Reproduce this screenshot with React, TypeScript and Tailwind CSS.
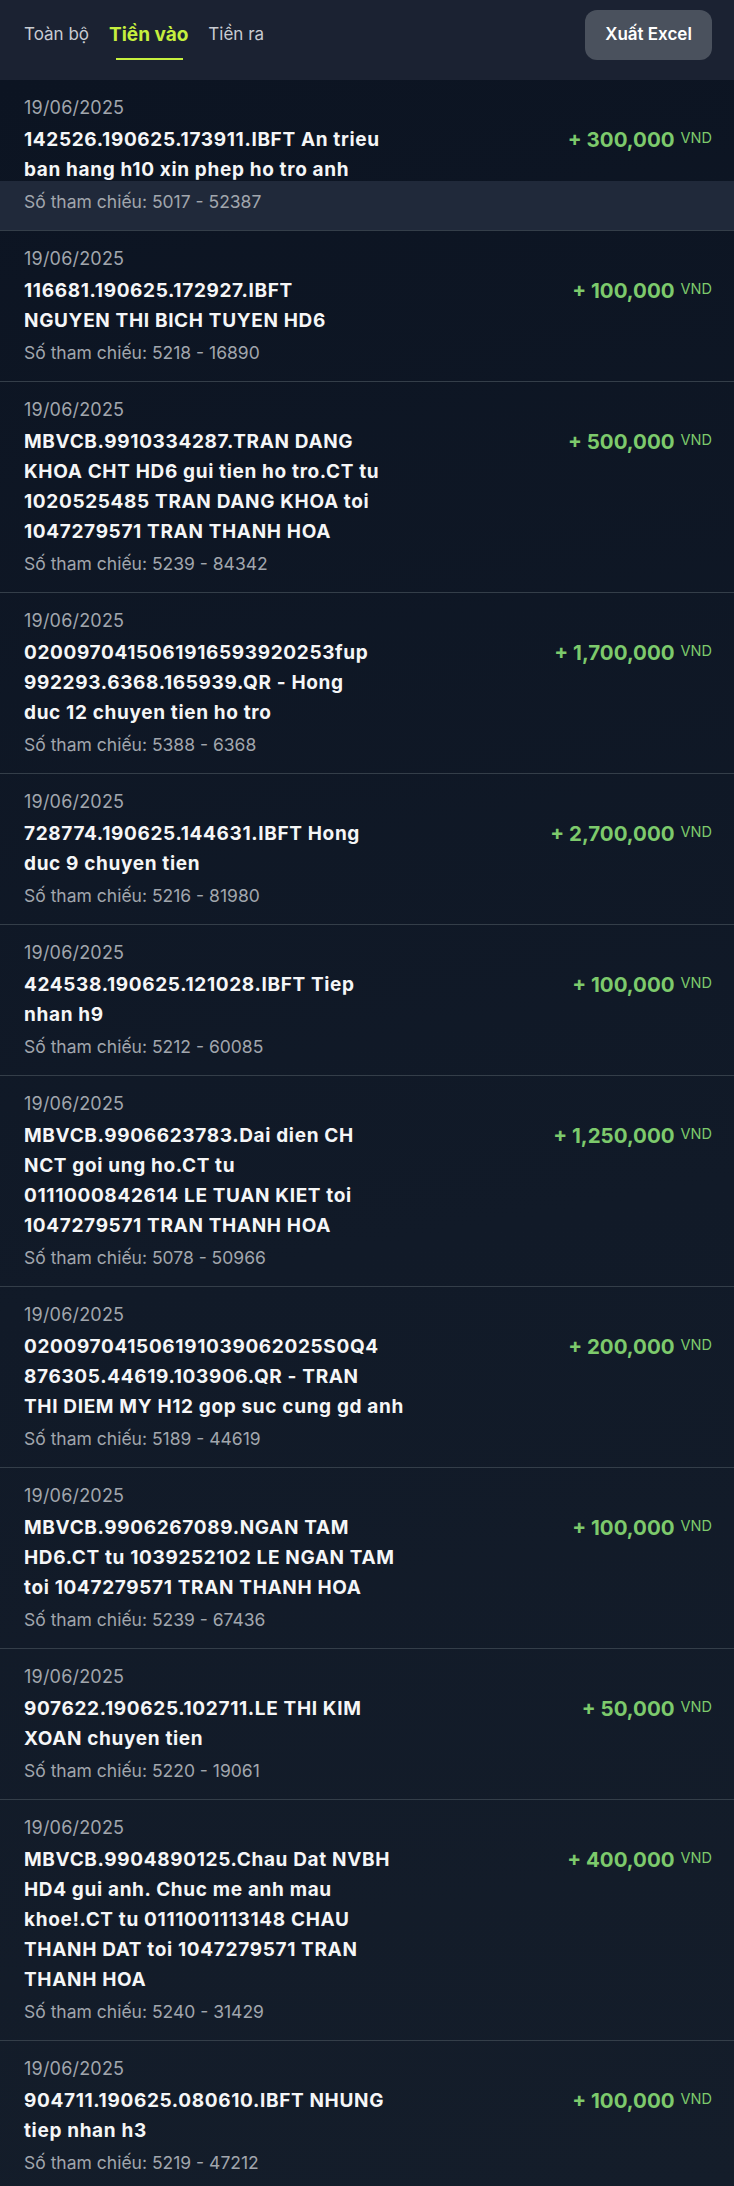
import React from 'react';

type Txn = {
  amount: string;
  lines: string[];
  ref: string;
};

const TXNS: Txn[] = [
  { amount: '300,000', lines: ['142526.190625.173911.IBFT An trieu', 'ban hang h10 xin phep ho tro anh'], ref: '5017 - 52387' },
  { amount: '100,000', lines: ['116681.190625.172927.IBFT', 'NGUYEN THI BICH TUYEN HD6'], ref: '5218 - 16890' },
  {
    amount: '500,000',
    lines: ['MBVCB.9910334287.TRAN DANG', 'KHOA CHT HD6 gui tien ho tro.CT tu', '1020525485 TRAN DANG KHOA toi', '1047279571 TRAN THANH HOA'],
    ref: '5239 - 84342',
  },
  { amount: '1,700,000', lines: ['0200970415061916593920253fup', '992293.6368.165939.QR - Hong', 'duc 12 chuyen tien ho tro'], ref: '5388 - 6368' },
  { amount: '2,700,000', lines: ['728774.190625.144631.IBFT Hong', 'duc 9 chuyen tien'], ref: '5216 - 81980' },
  { amount: '100,000', lines: ['424538.190625.121028.IBFT Tiep', 'nhan h9'], ref: '5212 - 60085' },
  {
    amount: '1,250,000',
    lines: ['MBVCB.9906623783.Dai dien CH', 'NCT goi ung ho.CT tu', '0111000842614 LE TUAN KIET toi', '1047279571 TRAN THANH HOA'],
    ref: '5078 - 50966',
  },
  { amount: '200,000', lines: ['020097041506191039062025S0Q4', '876305.44619.103906.QR - TRAN', 'THI DIEM MY H12 gop suc cung gd anh'], ref: '5189 - 44619' },
  { amount: '100,000', lines: ['MBVCB.9906267089.NGAN TAM', 'HD6.CT tu 1039252102 LE NGAN TAM', 'toi 1047279571 TRAN THANH HOA'], ref: '5239 - 67436' },
  { amount: '50,000', lines: ['907622.190625.102711.LE THI KIM', 'XOAN chuyen tien'], ref: '5220 - 19061' },
  {
    amount: '400,000',
    lines: ['MBVCB.9904890125.Chau Dat NVBH', 'HD4 gui anh. Chuc me anh mau', 'khoe!.CT tu 0111001113148 CHAU', 'THANH DAT toi 1047279571 TRAN', 'THANH HOA'],
    ref: '5240 - 31429',
  },
  { amount: '100,000', lines: ['904711.190625.080610.IBFT NHUNG', 'tiep nhan h3'], ref: '5219 - 47212' },
];

const TxnRow: React.FC<{ txn: Txn; highlight?: boolean }> = ({ txn, highlight }) => (
  <div
    className={
      'border-b border-[#343e49] pl-6 pr-[22px] pt-4 pb-4 ' +
      (highlight ? 'bg-[linear-gradient(to_bottom,transparent_101px,#20293a_101px)]' : '')
    }
  >
    <div className="text-[18px] leading-6 tracking-[0.2px] text-[#a1a6ad]">19/06/2025</div>
    <div className="mt-[5px] flex justify-between">
      <div className="text-[19px] font-bold leading-[30px] tracking-[0.65px] text-[#f5f6f7]">
        {txn.lines.map((line, i) => (
          <div key={i} className="whitespace-nowrap">
            {line}
          </div>
        ))}
      </div>
      <div className="flex items-start whitespace-nowrap text-[#7dca6c]">
        <span className="text-[20.5px] font-bold leading-[30px]">+ {txn.amount}</span>
        <span className="ml-[6px] mt-[5px] text-[14.5px] leading-[15px]">VND</span>
      </div>
    </div>
    <div className="mt-[5px] text-[17.5px] leading-6 text-[#a1a6ad]">Số tham chiếu: {txn.ref}</div>
  </div>
);

const App: React.FC = () => {
  return (
    <div className="min-h-screen w-full bg-[#0e1624] font-[Inter,sans-serif]">
      {/* Tabs + export */}
      <div className="flex h-20 items-start justify-between bg-[#1b2232] pl-6 pr-[22px] pt-[10px]">
        <div className="flex h-[50px] items-center gap-5 text-[17px]">
          <span className="text-[#c9ccd2]">Toàn bộ</span>
          <span className="relative flex h-full items-center text-[19px] font-bold text-[#c6ef3e]">
            Tiền vào
            <span className="absolute bottom-0 left-[7px] right-[5px] h-[2px] bg-[#c6ef3e]" />
          </span>
          <span className="text-[#c9ccd2]">Tiền ra</span>
        </div>
        <button className="h-[50px] w-[127px] rounded-xl bg-[#4a515d] text-[17px] font-semibold text-white">
          Xuất Excel
        </button>
      </div>

      {/* Transactions */}
      <div className="bg-[linear-gradient(170deg,#0c1422_0%,#111a28_55%,#141d2a_100%)]">
        {TXNS.map((t, i) => (
          <TxnRow key={i} txn={t} highlight={i === 0} />
        ))}
      </div>
    </div>
  );
};

export default App;
